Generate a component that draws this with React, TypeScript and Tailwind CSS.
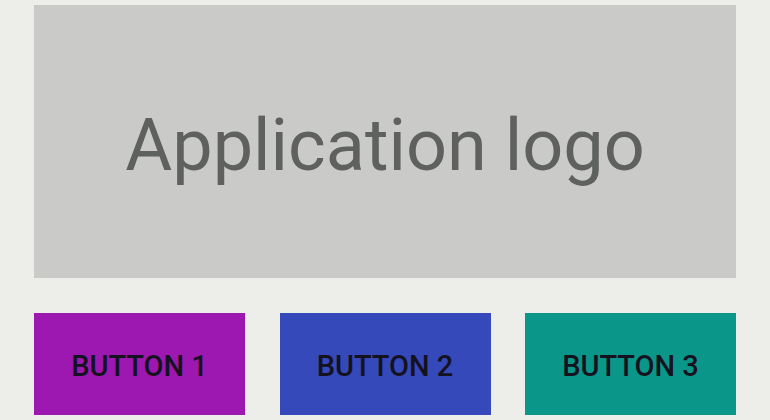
export default function App() {
  const buttons = [
    { label: 'BUTTON 1', cls: 'bg-[#9c18b0]' },
    { label: 'BUTTON 2', cls: 'bg-[#3549bb]' },
    { label: 'BUTTON 3', cls: 'bg-[#0a9688]' },
  ]

  return (
    <div className="w-[770px] h-[420px] bg-[#edeeea] px-[34px] pt-[5px] font-['Roboto',sans-serif] overflow-hidden">
      <div className="h-[273px] bg-[#cacbc8] flex items-center justify-center pt-[9px]">
        <span className="text-[72px] leading-none text-[#5e615d]">Application logo</span>
      </div>
      <div className="mt-[35px] flex justify-between">
        {buttons.map((b) => (
          <div
            key={b.label}
            className={`w-[211px] h-[102px] flex items-center justify-center pt-[5px] ${b.cls}`}
          >
            <span className="text-[29px] font-medium leading-none text-[#14121e]">{b.label}</span>
          </div>
        ))}
      </div>
    </div>
  )
}
